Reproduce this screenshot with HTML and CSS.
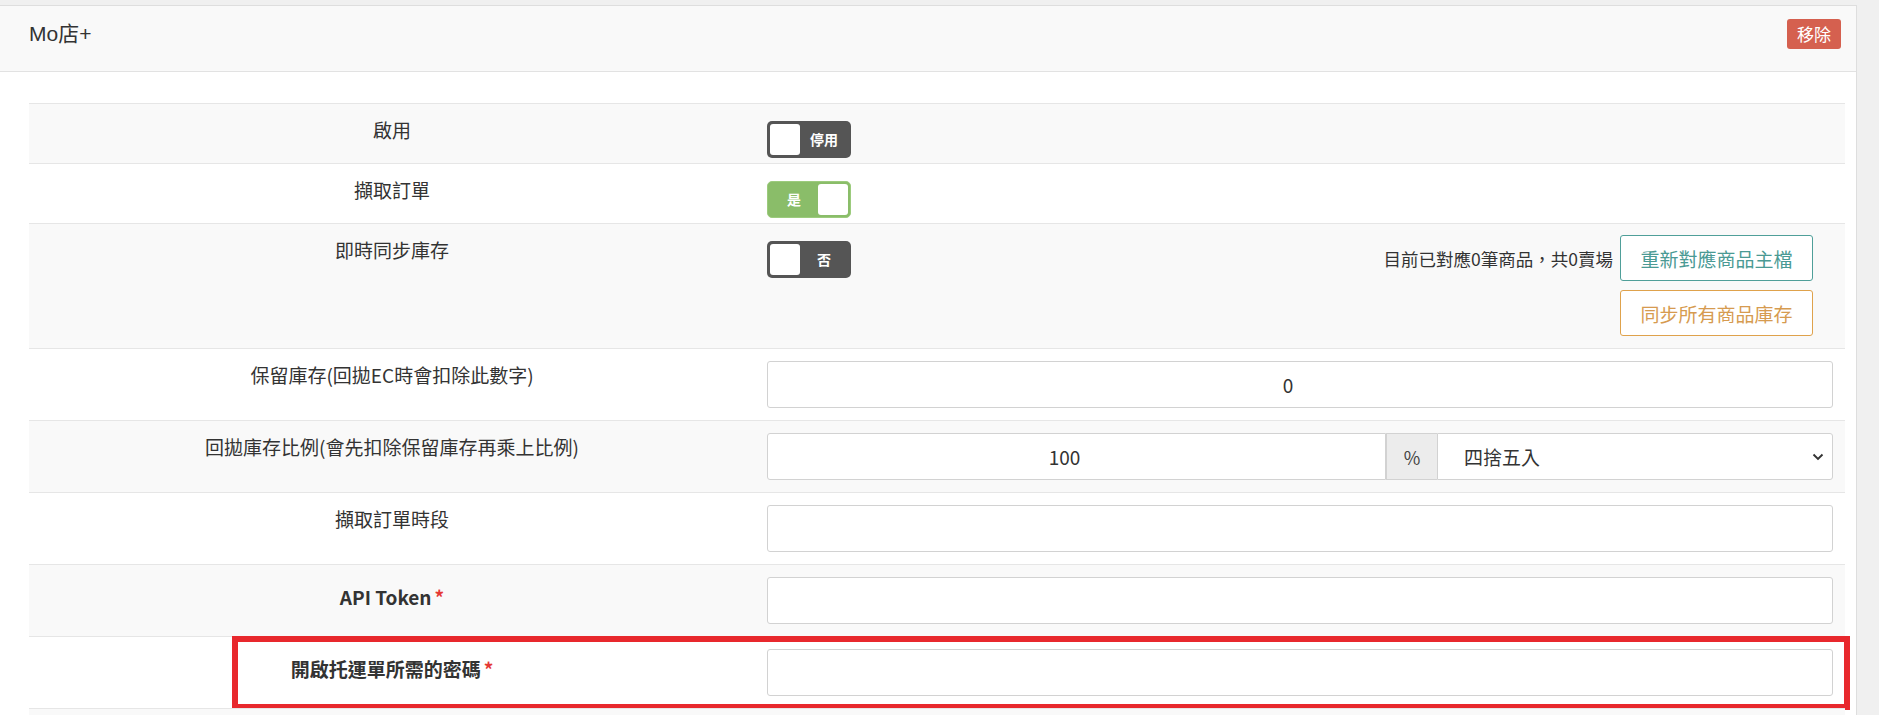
FILE: index.html
```html
<!DOCTYPE html>
<html lang="zh-Hant">
<head>
<meta charset="utf-8">
<title>Mo店+</title>
<link rel="stylesheet" href="styles.css">
</head>
<body>
<div class="panel">
  <div class="panel-head">
    <div class="panel-title">Mo店+</div>
    <button class="btn-remove">移除</button>
  </div>
  <div class="panel-body">
    <div class="row striped">
      <div class="lbl">啟用</div>
      <div class="val val-toggle"><div class="toggle off"><span class="knob"></span><span class="ttext">停用</span></div></div>
    </div>
    <div class="row">
      <div class="lbl">擷取訂單</div>
      <div class="val val-toggle"><div class="toggle on"><span class="ttext">是</span><span class="knob"></span></div></div>
    </div>
    <div class="row striped">
      <div class="lbl">即時同步庫存</div>
      <div class="val val-sync">
        <div class="toggle off"><span class="knob"></span><span class="ttext">否</span></div>
        <div class="sync-actions">
          <div class="sync-line">
            <span class="sync-info">目前已對應0筆商品，共0賣場</span>
            <button class="btn-outline teal">重新對應商品主檔</button>
          </div>
          <button class="btn-outline orange">同步所有商品庫存</button>
        </div>
      </div>
    </div>
    <div class="row">
      <div class="lbl">保留庫存(回拋EC時會扣除此數字)</div>
      <div class="val"><input class="field" type="text" value="0"></div>
    </div>
    <div class="row striped">
      <div class="lbl">回拋庫存比例(會先扣除保留庫存再乘上比例)</div>
      <div class="val">
        <div class="group">
          <input class="field group-input" type="text" value="100">
          <span class="addon">%</span>
          <div class="select-wrap">
            <select class="select"><option>四捨五入</option></select>
            <svg class="chev" width="14" height="10" viewBox="0 0 14 10"><path d="M2.5 2.5 L7 7 L11.5 2.5" fill="none" stroke="#333" stroke-width="1.9"/></svg>
          </div>
        </div>
      </div>
    </div>
    <div class="row">
      <div class="lbl">擷取訂單時段</div>
      <div class="val"><input class="field" type="text" value=""></div>
    </div>
    <div class="row striped">
      <div class="lbl bold">API Token<span class="req">*</span></div>
      <div class="val"><input class="field" type="text" value=""></div>
    </div>
    <div class="row row-mark">
      <div class="lbl bold">開啟托運單所需的密碼<span class="req">*</span></div>
      <div class="val"><input class="field" type="text" value=""></div>
      <div class="mark"></div>
    </div>
    <div class="row striped row-tail"></div>
  </div>
</div>
</body>
</html>
```

FILE: styles.css
```css
html, body {
  margin: 0;
  padding: 0;
}
body {
  background: #f0f0f0;
  font-family: "Noto Sans CJK TC", "Noto Sans", sans-serif;
  color: #333;
  overflow: hidden;
}
.panel {
  margin-top: 5px;
  width: 1857px;
  box-sizing: border-box;
  background: #fff;
  border-top: 1px solid #dedede;
  border-right: 1px solid #dedede;
  height: 720px;
}
.panel-head {
  height: 66px;
  box-sizing: border-box;
  background: #f9f9f9;
  border-bottom: 1px solid #e2e2e2;
  display: flex;
  justify-content: space-between;
  align-items: flex-start;
  padding: 13px 15px 0 29px;
}
.panel-title {
  font-family: "Liberation Sans", "Noto Sans CJK TC", sans-serif;
  font-size: 21px;
  line-height: 30px;
  color: #333;
}
.btn-remove {
  width: 54px;
  height: 30px;
  border: none;
  border-radius: 3px;
  background: #d5604f;
  color: #fff;
  font-family: "Noto Sans CJK TC", sans-serif;
  font-size: 17px;
  line-height: 30px;
  padding: 0;
}
.panel-body {
  padding: 31px 11px 0 29px;
}
.row {
  display: flex;
  align-items: flex-start;
  border-top: 1px solid #e6e6e6;
  position: relative;
}
.striped {
  background: #f9f9f9;
}
.lbl {
  width: 726px;
  box-sizing: border-box;
  padding: 9px 12px 15px;
  text-align: center;
  font-size: 19px;
  line-height: 34px;
  color: #333;
}
.lbl.bold {
  font-weight: bold;
  padding-top: 15px;
  padding-bottom: 9px;
}
.req {
  color: #e53935;
  margin-left: 3px;
}
.val {
  flex: 1;
  padding: 12px;
  box-sizing: border-box;
}
.val-toggle {
  padding-bottom: 5px;
}
.toggle {
  width: 84px;
  height: 37px;
  box-sizing: border-box;
  border-radius: 5px;
  padding: 3px;
  margin-top: 5px;
  display: flex;
  align-items: center;
}
.toggle.off {
  background: #555;
}
.toggle.on {
  background: #8abd69;
  border: 1px solid #9ccb7d;
  padding: 2px;
}
.knob {
  width: 30px;
  height: 31px;
  background: #fff;
  border-radius: 3px;
  flex: none;
}
.ttext {
  flex: 1;
  text-align: center;
  color: #fff;
  font-weight: bold;
  font-size: 14px;
  line-height: 31px;
}
.val-sync {
  display: flex;
  justify-content: space-between;
  align-items: flex-start;
  padding-top: 11px;
}
.val-sync .toggle {
  margin-top: 6px;
}
.sync-actions {
  display: flex;
  flex-direction: column;
  align-items: flex-end;
  gap: 9px;
  margin-right: 20px;
}
.sync-line {
  display: flex;
  align-items: center;
  gap: 7px;
}
.sync-info {
  font-size: 17.5px;
  color: #333;
}
.btn-outline {
  height: 46px;
  width: 193px;
  box-sizing: border-box;
  background: #fff;
  border-radius: 3px;
  font-family: "Noto Sans CJK TC", sans-serif;
  font-size: 19px;
  padding: 0;
}
.btn-outline.teal {
  border: 1px solid #4f9f99;
  color: #4a9a94;
}
.btn-outline.orange {
  border: 1px solid #dfa24c;
  color: #d69b50;
}
.field {
  display: block;
  width: 100%;
  height: 47px;
  box-sizing: border-box;
  border: 1px solid #d2d2d2;
  border-radius: 3px;
  background: #fff;
  text-align: center;
  font-family: "Noto Sans CJK TC", sans-serif;
  font-size: 19px;
  color: #333;
  padding: 0 24px 0 0;
  outline: none;
}
.group {
  display: flex;
  height: 47px;
}
.group-input {
  flex: 1;
  width: auto;
  border-radius: 3px 0 0 3px;
}
.addon {
  width: 51px;
  box-sizing: border-box;
  background: #ececec;
  border-top: 1px solid #d2d2d2;
  border-bottom: 1px solid #d2d2d2;
  border-left: 1px solid #d2d2d2;
  display: flex;
  align-items: center;
  justify-content: center;
  font-size: 18px;
  color: #444;
}
.select-wrap {
  position: relative;
  width: 396px;
}
.select {
  appearance: none;
  -webkit-appearance: none;
  width: 100%;
  height: 47px;
  box-sizing: border-box;
  border: 1px solid #d2d2d2;
  border-radius: 0 3px 3px 0;
  background: #fff;
  padding: 0 0 0 26px;
  font-family: "Noto Sans CJK TC", sans-serif;
  font-size: 19px;
  color: #333;
  outline: none;
}
.chev {
  position: absolute;
  right: 8px;
  top: 19px;
  pointer-events: none;
}
.mark {
  position: absolute;
  left: 203px;
  right: -5px;
  top: -1px;
  bottom: -2px;
  border: 6px solid #e8282d;
  pointer-events: none;
}
.row-tail {
  height: 20px;
}
```
